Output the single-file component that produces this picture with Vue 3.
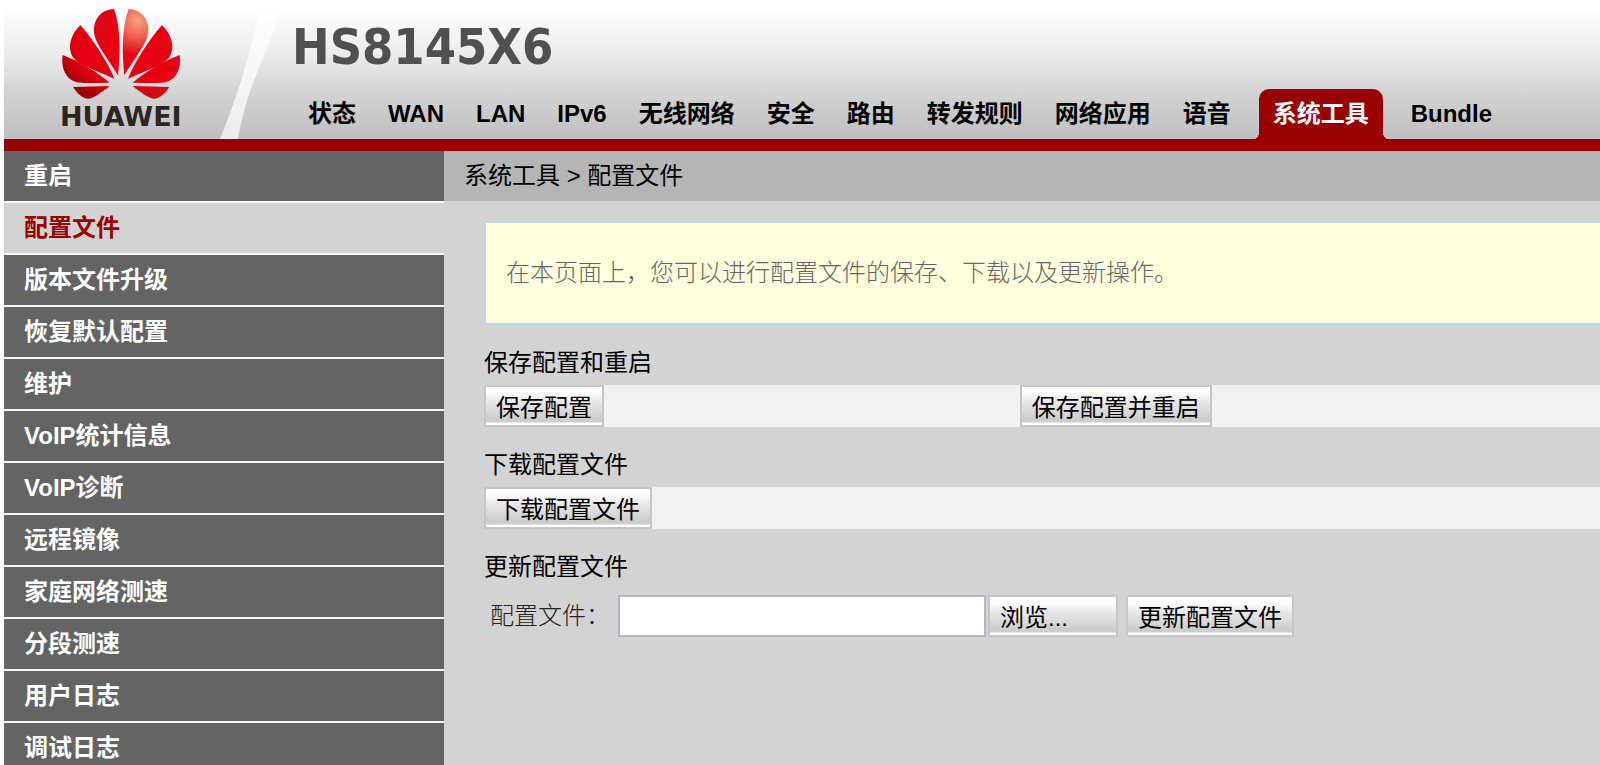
<script setup>
import { ref } from 'vue'

const tabs = ['状态', 'WAN', 'LAN', 'IPv6', '无线网络', '安全', '路由', '转发规则', '网络应用', '语音', '系统工具', 'Bundle']
const activeTab = ref('系统工具')

const menu = ['重启', '配置文件', '版本文件升级', '恢复默认配置', '维护', 'VoIP统计信息', 'VoIP诊断', '远程镜像', '家庭网络测速', '分段测速', '用户日志', '调试日志']
const activeItem = ref('配置文件')

const fileName = ref('')
</script>

<template>
  <div class="page">
    <header class="header">
      <svg class="swoosh" viewBox="0 0 70 139" aria-hidden="true">
        <defs>
          <linearGradient id="swooshFill" x1="0" y1="0" x2="0" y2="1">
            <stop offset="0" stop-color="#ffffff" />
            <stop offset="0.5" stop-color="#f8f8f8" />
            <stop offset="1" stop-color="#ececec" />
          </linearGradient>
        </defs>
        <path d="M47 0 C42 30 30 80 6 139 H24 C28 115 36 88 49 58 C56 42 64 20 69 0Z" fill="url(#swooshFill)" />
      </svg>

      <div class="brand">
        <svg class="petals" viewBox="180 21 366 279" role="img" aria-label="HUAWEI">
          <defs>
            <radialGradient id="petalGlow" gradientUnits="userSpaceOnUse" cx="412" cy="62" r="105">
              <stop offset="0" stop-color="#f5a583" />
              <stop offset="0.5" stop-color="#ee5a4c" />
              <stop offset="1" stop-color="#e60012" />
            </radialGradient>
            <radialGradient id="petalRed" gradientUnits="userSpaceOnUse" cx="330" cy="130" r="175">
              <stop offset="0" stop-color="#e60012" />
              <stop offset="0.6" stop-color="#e2000f" />
              <stop offset="1" stop-color="#980008" />
            </radialGradient>
            <linearGradient id="petalTop" x1="0" y1="0" x2="1" y2="1">
              <stop offset="0" stop-color="#c8101c" />
              <stop offset="0.5" stop-color="#e60012" />
            </linearGradient>
          </defs>
          <path fill="url(#petalTop)" d="M354 226 C361 160 362 80 342 27 C300 28 274 65 284 108 C290 135 330 185 354 226Z" />
          <path fill="url(#petalRed)" d="M343 236 C320 180 280 120 241 75 C210 105 202 145 218 170 C233 195 300 215 343 236Z" />
          <path fill="url(#petalRed)" d="M329 248 C290 215 240 185 188 165 C182 205 198 238 230 247 C250 251 300 248 329 248Z" />
          <path fill="url(#petalRed)" d="M329 258 L219 261 C240 294 262 302 280 292 C300 281 320 266 329 258Z" />
          <path fill="url(#petalGlow)" d="M373 226 C366 160 365 80 386 27 C428 28 453 65 443 106 C437 135 397 185 373 226Z" />
          <g fill="#e60012" transform="translate(727 0) scale(-1 1)">
            <path d="M343 236 C320 180 280 120 241 75 C210 105 202 145 218 170 C233 195 300 215 343 236Z" />
            <path d="M329 248 C290 215 240 185 188 165 C182 205 198 238 230 247 C250 251 300 248 329 248Z" />
            <path fill="#d00a16" d="M329 258 L219 261 C240 294 262 302 280 292 C300 281 320 266 329 258Z" />
          </g>
        </svg>
        <span class="wordmark">HUAWEI</span>
      </div>

      <div class="head-main">
        <h1 class="model">HS8145X6</h1>
        <nav class="tabs">
          <a
            v-for="tab in tabs"
            :key="tab"
            href="#"
            class="tab"
            :class="{ active: tab === activeTab }"
            @click.prevent="activeTab = tab"
          >{{ tab }}</a>
        </nav>
      </div>
    </header>

    <div class="body">
      <nav class="sidebar">
        <a
          v-for="item in menu"
          :key="item"
          href="#"
          class="side-item"
          :class="{ active: item === activeItem }"
          @click.prevent="activeItem = item"
        >{{ item }}</a>
      </nav>

      <main class="main">
        <div class="crumb">系统工具 &gt; 配置文件</div>
        <div class="content">
          <p class="notice">在本页面上，您可以进行配置文件的保存、下载以及更新操作。</p>

          <h2 class="title">保存配置和重启</h2>
          <div class="row">
            <div class="cell"><button type="button" class="btn">保存配置</button></div>
            <div class="cell"><button type="button" class="btn">保存配置并重启</button></div>
          </div>

          <h2 class="title">下载配置文件</h2>
          <div class="row">
            <div class="cell"><button type="button" class="btn">下载配置文件</button></div>
          </div>

          <h2 class="title">更新配置文件</h2>
          <form class="upload" @submit.prevent>
            <label for="config-file" class="label">配置文件：</label>
            <input id="config-file" v-model="fileName" type="text" class="field" />
            <button type="button" class="btn browse">浏览...</button>
            <button type="submit" class="btn">更新配置文件</button>
          </form>
        </div>
      </main>
    </div>
  </div>
</template>

<style>
body {
  margin: 0;
  overflow: hidden;
  background: #fff;
}
</style>

<style scoped>
.page {
  display: flex;
  flex-direction: column;
  min-height: 100vh;
  padding-left: 4px;
  box-sizing: border-box;
  font-family: "Liberation Sans", "Noto Sans CJK SC", sans-serif;
  font-size: 24px;
  color: #000;
}
a {
  text-decoration: none;
}
.header {
  position: relative;
  display: flex;
  height: 139px;
  border-bottom: 12px solid #990000;
  background: linear-gradient(to bottom, #ffffff 0, #fdfdfd 12px, #ebebeb 56px, #d6d6d6 86px, #bfbfbf 139px);
  background-origin: border-box;
}
.swoosh {
  position: absolute;
  left: 210px;
  top: 0;
  width: 70px;
  height: 139px;
}
.brand {
  display: flex;
  flex-direction: column;
  width: 228px;
  padding: 7px 0 0 56px;
  box-sizing: border-box;
}
.petals {
  width: 122px;
  height: 93px;
}
.wordmark {
  font-family: "DejaVu Sans", sans-serif;
  font-weight: bold;
  font-size: 27px;
  line-height: 34px;
  color: #2e2523;
}
.head-main {
  flex: 1;
  display: flex;
  flex-direction: column;
  justify-content: space-between;
  padding-left: 60px;
}
.model {
  margin: 17px 0 0;
  font-family: "DejaVu Sans Condensed", "DejaVu Sans", sans-serif;
  font-weight: bold;
  font-size: 50px;
  line-height: 60px;
  color: #505050;
}
.tabs {
  display: flex;
  align-items: flex-end;
  white-space: nowrap;
}
.tab {
  padding: 0 16px;
  line-height: 50px;
  font-weight: bold;
  color: #000;
}
.tab.active {
  position: relative;
  margin: 0 12px;
  padding: 0 14px;
  border-radius: 10px 10px 0 0;
  background: #990000;
  color: #fff;
}
.tab.active::before,
.tab.active::after {
  content: "";
  position: absolute;
  bottom: 0;
  width: 5px;
  height: 6px;
}
.tab.active::before {
  right: 100%;
  background: radial-gradient(ellipse 5px 6px at 0 0, transparent 95%, #990000 100%);
}
.tab.active::after {
  left: 100%;
  background: radial-gradient(ellipse 5px 6px at 100% 0, transparent 95%, #990000 100%);
}
.body {
  flex: 1;
  display: flex;
}
.sidebar {
  flex: none;
  width: 440px;
  display: flex;
  flex-direction: column;
  gap: 2px;
  background: #f6f6f6;
}
.side-item {
  padding-left: 20px;
  line-height: 50px;
  font-weight: bold;
  color: #fff;
  background: #646464;
}
.side-item.active {
  color: #990000;
  background: #d3d3d3;
}
.main {
  flex: 1;
  min-width: 0;
  background: #d3d3d3;
}
.crumb {
  padding-left: 20px;
  line-height: 50px;
  background: #b5b5b5;
}
.content {
  padding: 20px 0 0 40px;
}
.notice {
  margin: 0;
  padding: 0 20px;
  border: 2px solid #bfd8e6;
  border-right: 0;
  line-height: 100px;
  font-weight: 300;
  color: #666;
  background: #ffffe0;
}
.title {
  margin: 16px 0 0;
  line-height: 44px;
  font-size: 24px;
  font-weight: 400;
}
.row {
  display: grid;
  grid-template-columns: 48% 1fr;
  background: #f1f1f1;
}
.cell {
  display: flex;
}
.btn {
  height: 42px;
  padding: 4px 10px 0;
  border: 2px solid #c6c6c6;
  border-radius: 0;
  box-sizing: border-box;
  font: inherit;
  line-height: 34px;
  color: #000;
  white-space: nowrap;
  background: linear-gradient(to bottom, #ffffff 0, #fcfcfc 6px, #e6e6e6 16px, #cdcdcd 32px, #cdcdcd 35px, #e4e4e4 35px, #e4e4e4 36px, #ffffff 36px);
  background-origin: padding-box;
}
.upload {
  display: flex;
  align-items: center;
  padding: 6px 0 0 6px;
}
.label {
  width: 128px;
  line-height: 42px;
  font-weight: 300;
  color: #222;
}
.field {
  width: 368px;
  height: 42px;
  padding: 0 8px;
  border: 2px solid #b3b5c9;
  box-sizing: border-box;
  font: inherit;
  background: #fff;
}
.browse {
  width: 130px;
  margin: 0 8px 0 2px;
  text-align: left;
}
</style>
